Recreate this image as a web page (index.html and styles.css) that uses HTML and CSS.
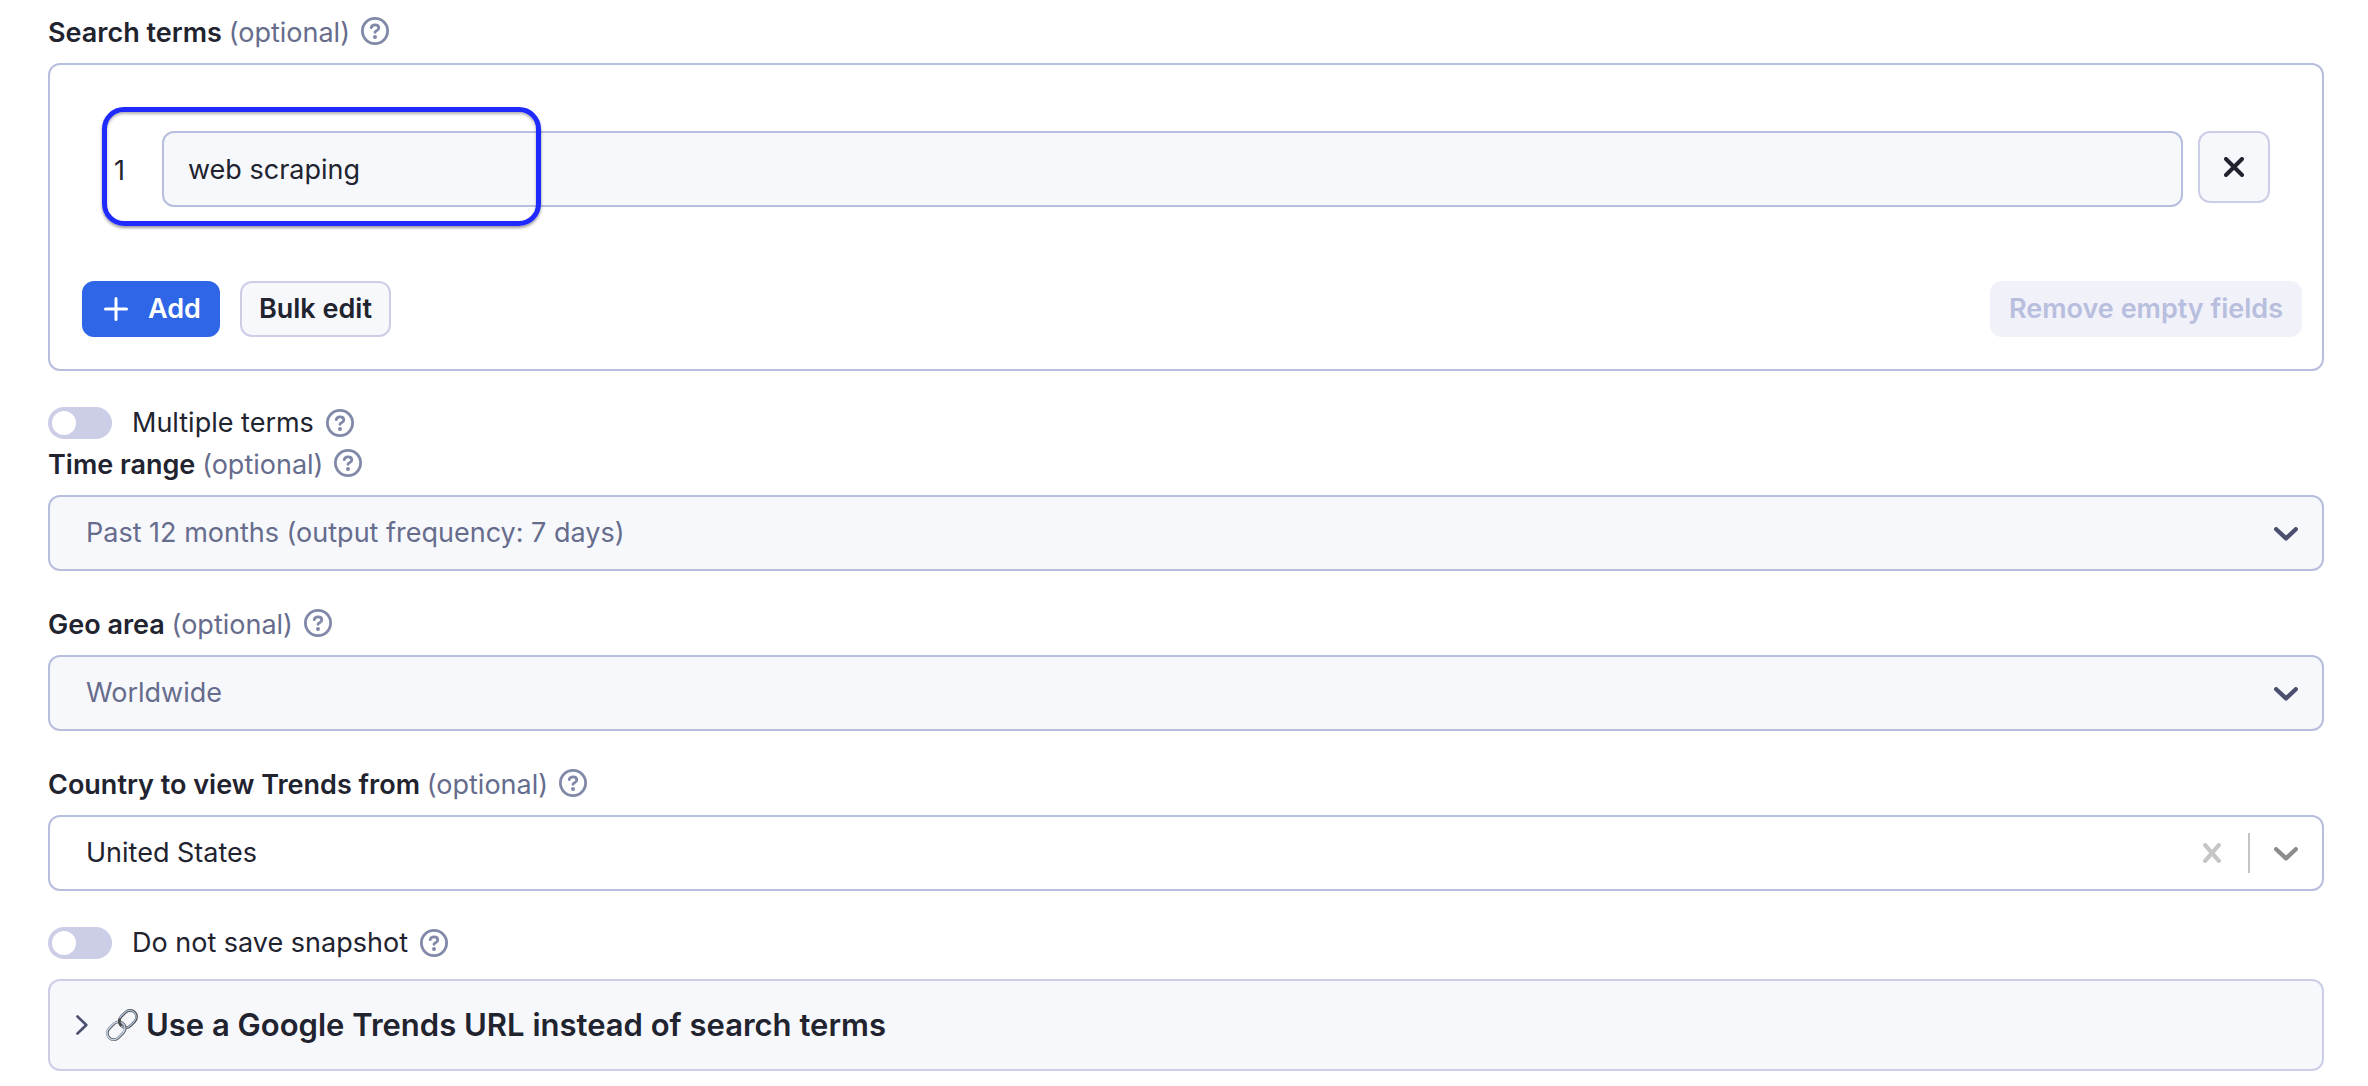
FILE: index.html
```html
<!DOCTYPE html>
<html lang="en">
<head>
<meta charset="utf-8">
<meta name="viewport" content="width=device-width, initial-scale=1">
<title>Google Trends input</title>
<link rel="stylesheet" href="styles.css">
</head>
<body>
<svg class="sprite" aria-hidden="true">
  <symbol id="help" viewBox="0 0 28 28">
    <circle cx="14" cy="14" r="12.6" fill="none" stroke="currentColor" stroke-width="2.8"/>
    <path d="M10.2 10.600c.5-1.800 1.900-2.700 3.800-2.700 2.200 0 3.800 1.200 3.800 3 0 2.300-2.900 2.700-3.800 4.300" fill="none" stroke="currentColor" stroke-width="2.800" stroke-linecap="round" stroke-linejoin="round"/>
    <circle cx="14" cy="20" r="2" fill="currentColor"/>
  </symbol>
  <symbol id="chevron" viewBox="0 0 24 14">
    <path d="M2.200 2.200 12 11.400l9.800-9.200" fill="none" stroke="currentColor" stroke-width="4.300" stroke-linecap="round" stroke-linejoin="round"/>
  </symbol>
  <symbol id="cross" viewBox="0 0 20 20">
    <path d="M2 2l16 16M18 2L2 18" fill="none" stroke="currentColor" stroke-width="4" stroke-linecap="round"/>
  </symbol>
</svg>
<form class="form">
  <section class="field">
    <div class="field-label">
      <label for="term-1">Search terms <span class="optional">(optional)</span></label>
      <button type="button" class="help" aria-label="Help"><svg><use href="#help"/></svg></button>
    </div>
    <div class="panel">
      <div class="term-row">
        <span class="term-number">1</span>
        <input class="term-input" id="term-1" type="text" value="web scraping">
        <button type="button" class="btn btn-remove" aria-label="Remove"><svg><use href="#cross"/></svg></button>
        <div class="callout"></div>
      </div>
      <div class="actions">
        <button type="button" class="btn btn-primary">
          <svg viewBox="0 0 24 24"><path d="M12 1.500v21M1.500 12h21" fill="none" stroke="currentColor" stroke-width="3" stroke-linecap="round"/></svg>
          Add
        </button>
        <button type="button" class="btn">Bulk edit</button>
        <button type="button" class="btn btn-clear" disabled>Remove empty fields</button>
      </div>
    </div>
  </section>

  <div class="toggle-row">
    <input class="toggle" type="checkbox" role="switch" id="multiple">
    <label for="multiple">Multiple terms</label>
    <button type="button" class="help" aria-label="Help"><svg><use href="#help"/></svg></button>
  </div>

  <section class="field">
    <div class="field-label">
      <label for="time">Time range <span class="optional">(optional)</span></label>
      <button type="button" class="help" aria-label="Help"><svg><use href="#help"/></svg></button>
    </div>
    <div class="select-box">
      <select id="time"><option>Past 12 months (output frequency: 7 days)</option></select>
      <span class="indicators"><svg class="chevron"><use href="#chevron"/></svg></span>
    </div>
  </section>

  <section class="field">
    <div class="field-label">
      <label for="geo">Geo area <span class="optional">(optional)</span></label>
      <button type="button" class="help" aria-label="Help"><svg><use href="#help"/></svg></button>
    </div>
    <div class="select-box">
      <select id="geo"><option>Worldwide</option></select>
      <span class="indicators"><svg class="chevron"><use href="#chevron"/></svg></span>
    </div>
  </section>

  <section class="field">
    <div class="field-label">
      <label for="country">Country to view Trends from <span class="optional">(optional)</span></label>
      <button type="button" class="help" aria-label="Help"><svg><use href="#help"/></svg></button>
    </div>
    <div class="select-box select-filled">
      <select id="country"><option>United States</option></select>
      <span class="indicators">
        <button type="button" class="clear" aria-label="Clear"><svg viewBox="0 0 18 20"><path d="M2.200 2.200l13.600 15.600M15.800 2.200L2.200 17.800" fill="none" stroke="currentColor" stroke-width="4.200" stroke-linecap="round"/></svg></button>
        <span class="separator"></span>
        <svg class="chevron"><use href="#chevron"/></svg>
      </span>
    </div>
  </section>

  <div class="toggle-row">
    <input class="toggle" type="checkbox" role="switch" id="snapshot">
    <label for="snapshot">Do not save snapshot</label>
    <button type="button" class="help" aria-label="Help"><svg><use href="#help"/></svg></button>
  </div>

  <details class="section">
    <summary>
      <svg class="arrow" viewBox="0 0 12 20"><path d="M1.500 1.500 10.300 10l-8.800 8.500" fill="none" stroke="currentColor" stroke-width="2.600" stroke-linecap="round" stroke-linejoin="round"/></svg>
      <svg class="link-icon" viewBox="0 0 32 32">
        <g fill="none" transform="rotate(-45 16 16)">
          <rect x="15" y="9.500" width="19" height="13" rx="6.500" stroke="#4d4a4c" stroke-width="2.600"/>
          <rect x="14.700" y="9.200" width="19" height="13" rx="6.500" stroke="#a9bdd6" stroke-width="1.200"/>
          <rect x="-2" y="9.500" width="20" height="13" rx="6.500" stroke="#55555a" stroke-width="2.600"/>
          <rect x="-2.300" y="9.200" width="20" height="13" rx="6.500" stroke="#c3d3e6" stroke-width="1.500"/>
          <path d="M15 16c0-3 1.500-5 4-6" stroke="#4d4a4c" stroke-width="2.600"/>
        </g>
      </svg>
      <span>Use a Google Trends URL instead of search terms</span>
    </summary>
  </details>
</form>
</body>
</html>
```
FILE: styles.css
```css
* {
  box-sizing: border-box;
}

body {
  margin: 0;
  background: #fff;
  color: #21232f;
  font-family: Inter, "Liberation Sans", sans-serif;
  font-size: 27px;
  line-height: 40px;
}

button,
input,
select {
  margin: 0;
  color: inherit;
  font: inherit;
}

svg {
  display: block;
  width: 100%;
  height: 100%;
}

.sprite {
  position: absolute;
  width: 0;
  height: 0;
}

.form {
  padding: 13px 44px 14px 48px;
}

/* Labelled fields */
.field-label {
  display: flex;
  align-items: center;
  gap: 11px;
  height: 40px;
  margin-bottom: 10px;
  font-weight: 600;
}

.optional {
  color: #666c8c;
  font-weight: 400;
}

.help {
  flex: none;
  width: 28px;
  height: 28px;
  padding: 0;
  border: 0;
  background: none;
  color: #8289a8;
}

.field-label .help {
  margin-bottom: 4px;
}

.field + .field {
  margin-top: 34px;
}

/* Search terms list */
.panel {
  padding: 66px 20px 32px 32px;
  border: 2px solid #b8bedd;
  border-radius: 12px;
}

.term-row {
  position: relative;
  display: flex;
  align-items: flex-start;
  margin: 0 32px 74px;
}

.term-number {
  flex: none;
  width: 48px;
  padding-top: 20px;
}

.term-input {
  flex: 1;
  min-width: 0;
  height: 76px;
  margin-right: 15px;
  padding: 0 24px;
  border: 2px solid #b8bedd;
  border-radius: 12px;
  background: #f7f8fc;
}

.callout {
  position: absolute;
  top: -24px;
  left: -12px;
  width: 439px;
  height: 119px;
  border: 5px solid #1f2aff;
  border-radius: 22px;
  box-shadow: 0 2px 3px rgba(0, 0, 0, 0.4), inset 0 2px 3px rgba(0, 0, 0, 0.3);
  pointer-events: none;
}

.actions {
  display: flex;
  gap: 20px;
}

.btn {
  height: 56px;
  padding: 0 17px;
  border: 2px solid #cbcee6;
  border-radius: 12px;
  background: #f7f8fc;
  font-weight: 600;
  line-height: 40px;
  white-space: nowrap;
}

.btn-primary {
  display: flex;
  align-items: center;
  gap: 20px;
  padding: 0 17px 0 20px;
  border-color: #2f66e8;
  background: #2f66e8;
  color: #fff;
}

.btn-primary svg {
  width: 24px;
  height: 24px;
}

.btn-remove {
  flex: none;
  width: 72px;
  height: 72px;
  padding: 24px;
}

.btn-remove svg {
  width: 20px;
  height: 20px;
}

.btn-clear {
  margin-left: auto;
  border-color: #f1f1fa;
  background: #f1f1fa;
  color: #b8bedd;
}

/* Switches */
.toggle-row {
  display: flex;
  align-items: center;
  gap: 12px;
  height: 40px;
  margin: 32px 0 2px;
}

.toggle {
  flex: none;
  width: 64px;
  height: 32px;
  margin-right: 8px;
  padding: 4px;
  appearance: none;
  border-radius: 16px;
  background: #cbcee6;
}

.toggle::before {
  display: block;
  width: 24px;
  height: 24px;
  border-radius: 50%;
  background: #fff;
  content: "";
}

.toggle:checked::before {
  margin-left: auto;
}

/* Drop-downs */
.select-box {
  display: grid;
  align-items: center;
  color: #4a506d;
}

.select-box select,
.indicators {
  grid-area: 1 / 1;
}

.select-box select {
  width: 100%;
  height: 76px;
  padding: 0 120px 0 36px;
  appearance: none;
  border: 2px solid #b8bedd;
  border-radius: 12px;
  background: #f7f8fc;
  color: #666c8c;
}

.indicators {
  display: flex;
  justify-self: end;
  align-items: center;
  gap: 24px;
  padding-right: 26px;
  pointer-events: none;
}

.chevron {
  width: 24px;
  height: 14px;
  margin-top: 2px;
}

.select-filled {
  color: #8c8c8c;
}

.select-filled select {
  background: #fff;
  color: #21232f;
}

.clear {
  width: 18px;
  height: 20px;
  margin-right: 3px;
  padding: 0;
  border: 0;
  background: none;
  color: #c6c6c6;
  pointer-events: auto;
}

.separator {
  width: 2px;
  height: 40px;
  background: #c4c4c4;
}

/* Collapsible section */
.section {
  margin-top: 16px;
  border: 2px solid #cbcee6;
  border-radius: 12px;
  background: #f7f8fc;
}

.section summary {
  display: flex;
  align-items: center;
  height: 88px;
  padding: 0 26px;
  font-size: 31px;
  font-weight: 600;
  list-style: none;
}

.section[open] .arrow {
  transform: rotate(90deg);
}

.arrow {
  width: 12px;
  height: 20px;
  margin-right: 18px;
  color: #4a506d;
}

.link-icon {
  width: 32px;
  height: 32px;
  margin-right: 8px;
}
```
